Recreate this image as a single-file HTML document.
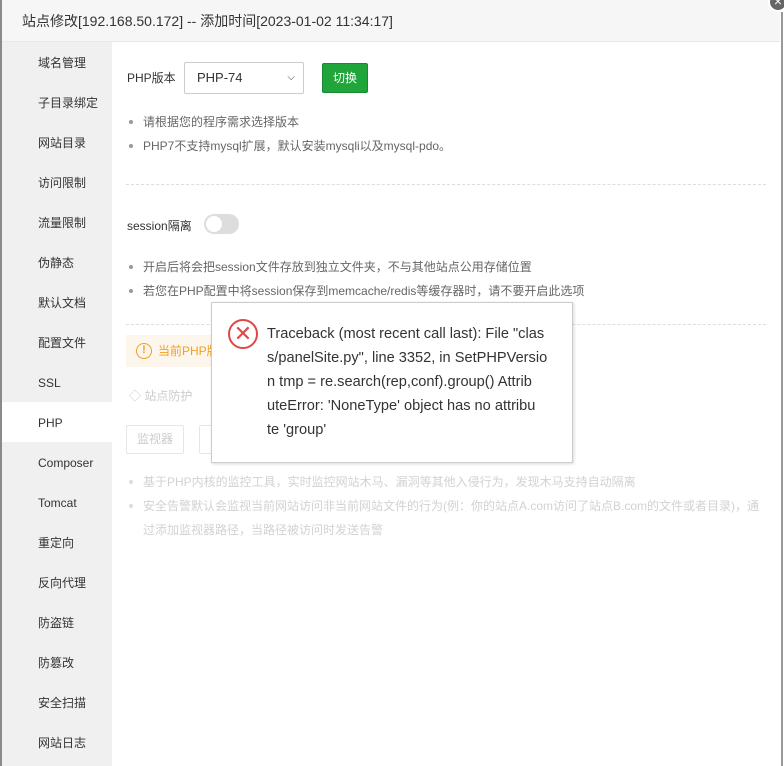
<!DOCTYPE html>
<html><head><meta charset="utf-8"><style>
*{margin:0;padding:0;box-sizing:border-box}
body{width:784px;height:766px;overflow:hidden;background:#fff;font-family:"Liberation Sans","Noto Sans CJK SC",sans-serif;font-size:12px;color:#333;position:relative}
.dlg{position:absolute;left:2px;top:0;width:778px;height:766px;background:#fff}
.edge{position:absolute;left:0;top:0;width:2px;height:766px;background:#8a8a8a}
.redge{position:absolute;left:781px;top:12px;width:2px;height:754px;background:#999}
.title{position:absolute;left:0;top:0;width:778px;height:42px;background:#f6f6f6;border-bottom:1px solid #e8e8e8;font-size:14px;line-height:42px;padding-left:20px;color:#333}
.close{position:absolute;left:768px;top:-8px;width:20px;height:20px;border-radius:50%;background:#666;border:2px solid #fff;color:#fff;font-size:14px;line-height:15px;text-align:center}
.side{position:absolute;left:0;top:42px;width:110px;height:724px;background:#f0f0f0}
.side div{height:40px;line-height:42px;padding-left:36px;font-size:12px;color:#333}
.side .act{background:#fff}
.main{position:absolute;left:112px;top:42px;right:0;bottom:0}
.abs{position:absolute}
ul{list-style:none}
li{position:relative;padding-left:17px;line-height:24px;color:#666}
li:before{content:"";position:absolute;left:3px;top:10px;width:4px;height:4px;border-radius:50%;background:#999}
.dash{position:absolute;left:14px;width:640px;border-top:1px dashed #ddd}
.faded li{color:#d2d2d2}.faded li:before{background:#ddd}
</style></head><body>
<div class="edge"></div>
<div class="dlg">
<div class="title">站点修改[192.168.50.172] -- 添加时间[2023-01-02 11:34:17]</div>
<div class="side">
<div>域名管理</div><div>子目录绑定</div><div>网站目录</div><div>访问限制</div><div>流量限制</div><div>伪静态</div><div>默认文档</div><div>配置文件</div><div>SSL</div><div class="act">PHP</div><div>Composer</div><div>Tomcat</div><div>重定向</div><div>反向代理</div><div>防盗链</div><div>防篡改</div><div>安全扫描</div><div>网站日志</div>
</div>
</div>
<div class="redge"></div>
<div class="close">×</div>
<div class="main">
<div class="abs" style="left:15px;top:28px;line-height:16px">PHP版本</div>
<div class="abs" style="left:72px;top:20px;width:120px;height:32px;border:1px solid #ccc;border-radius:2px;line-height:30px;padding-left:12px;font-size:13px">PHP-74<span style="position:absolute;right:8px;top:0;font-size:10px">&#9013;</span></div>
<div class="abs" style="left:210px;top:21px;width:46px;height:30px;background:#20a53a;border:1px solid #168a2c;border-radius:2px;color:#fff;line-height:28px;text-align:center">切换</div>
<ul class="abs" style="left:14px;top:68px"><li>请根据您的程序需求选择版本</li><li>PHP7不支持mysql扩展，默认安装mysqli以及mysql-pdo。</li></ul>
<div class="dash" style="top:142px"></div>
<div class="abs" style="left:15px;top:176px;line-height:16px">session隔离</div>
<div class="abs" style="left:92px;top:172px;width:35px;height:20px;border-radius:10px;background:#ddd"><div style="position:absolute;left:1px;top:1px;width:18px;height:18px;border-radius:50%;background:#fff;border:1px solid #ddd"></div></div>
<ul class="abs" style="left:14px;top:213px"><li>开启后将会把session文件存放到独立文件夹，不与其他站点公用存储位置</li><li>若您在PHP配置中将session保存到memcache/redis等缓存器时，请不要开启此选项</li></ul>
<div class="dash" style="top:282px"></div>
<div class="abs" style="left:14px;top:293px;width:110px;height:32px;background:#fdf6ec;color:#f0a020;line-height:32px;padding-left:32px">当前PHP版本</div>
<div class="abs" style="left:24px;top:301px;width:16px;height:16px;border:1.5px solid #f0a020;border-radius:50%;color:#f0a020;font-size:11px;line-height:13px;text-align:center;font-weight:bold">!</div>
<div class="abs" style="left:17px;top:345px;color:#ccc">◇ 站点防护</div>
<div class="abs" style="left:14px;top:383px;width:58px;height:29px;border:1px solid #e6e6e6;border-radius:2px;color:#ccc;line-height:27px;text-align:center">监视器</div>
<div class="abs" style="left:87px;top:383px;width:30px;height:29px;border:1px solid #e6e6e6;border-radius:2px"></div>
<ul class="abs faded" style="left:14px;top:428px;width:642px"><li>基于PHP内核的监控工具，实时监控网站木马、漏洞等其他入侵行为，发现木马支持自动隔离</li><li>安全告警默认会监视当前网站访问非当前网站文件的行为(例：你的站点A.com访问了站点B.com的文件或者目录)，通过添加监视器路径，当路径被访问时发送告警</li></ul>
</div>
<div class="abs" style="left:211px;top:302px;width:362px;height:161px;background:#fff;border:1px solid #ccc;box-shadow:1px 1px 3px rgba(0,0,0,.15)">
<div class="abs" style="left:16px;top:16px;width:30px;height:30px;border:2px solid #e04848;border-radius:50%;color:#e04848;font-size:22px;line-height:25px;text-align:center">✕</div>
<div class="abs" style="left:55px;top:19px;width:300px;font-size:14.6px;line-height:24px;color:#333;white-space:nowrap">Traceback (most recent call last): File "clas<br>s/panelSite.py", line 3352, in SetPHPVersio<br>n tmp = re.search(rep,conf).group() Attrib<br>uteError: 'NoneType' object has no attribu<br>te 'group'</div>
</div>
</body></html>
